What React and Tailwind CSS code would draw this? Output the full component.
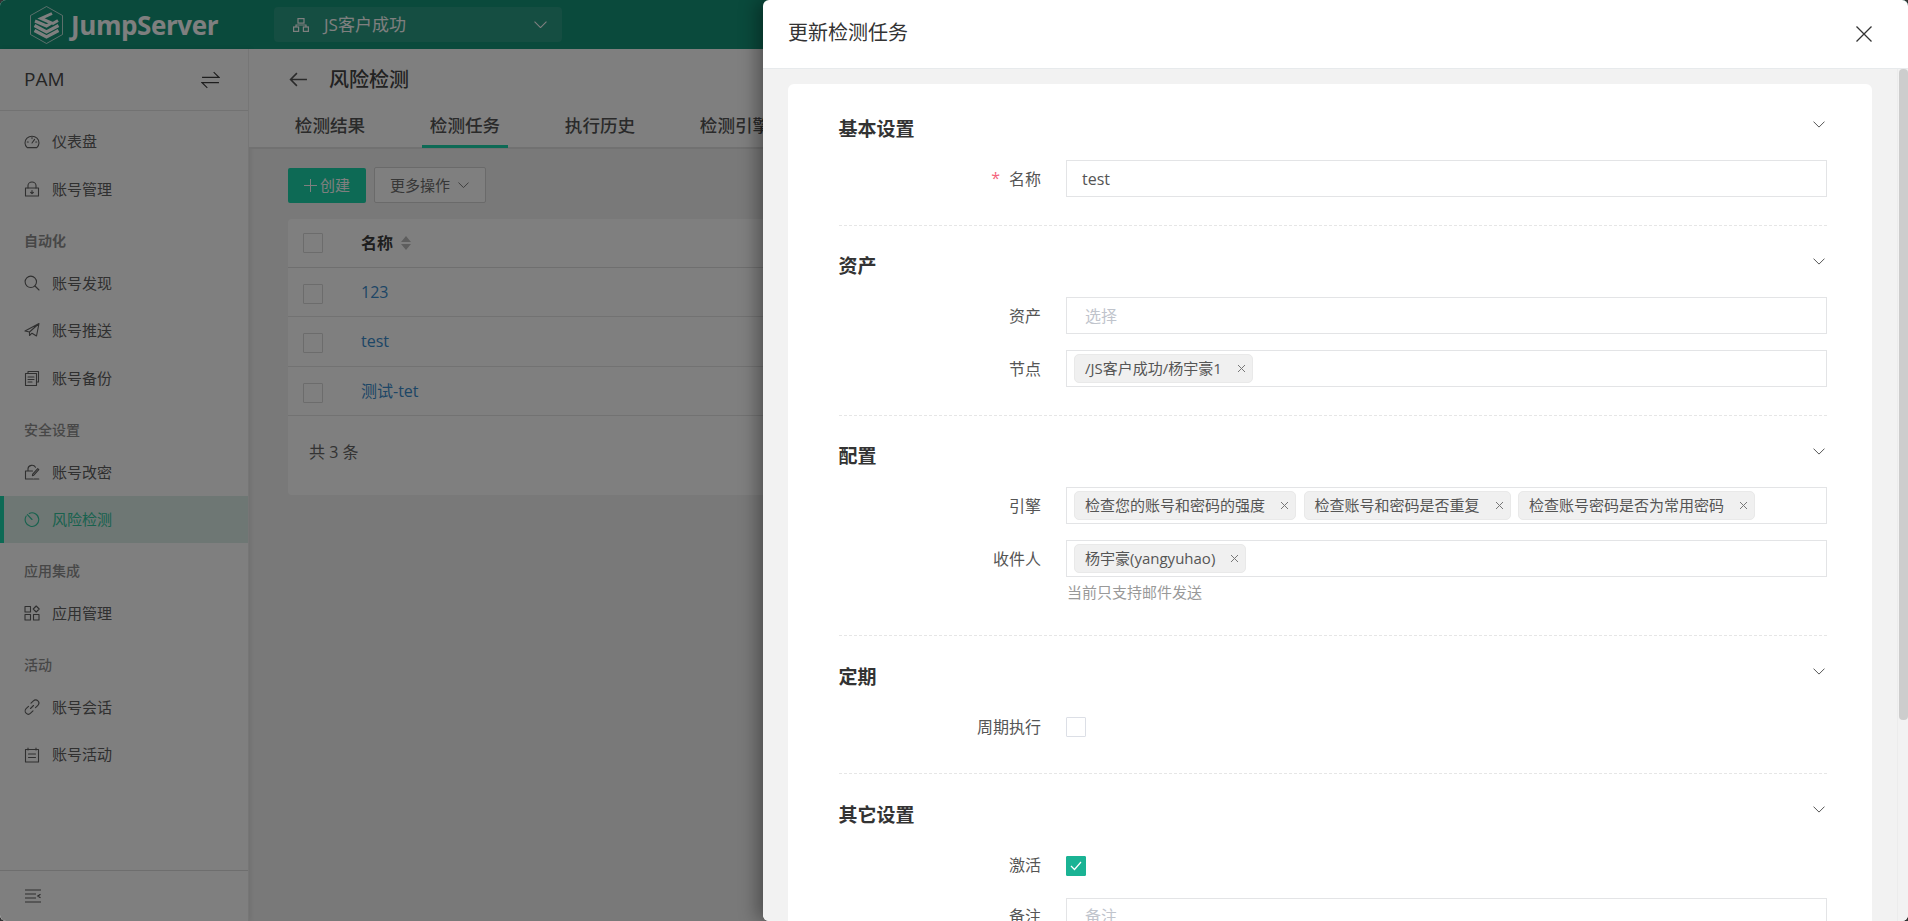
import React from "react";

const S = { fill: "none", stroke: "currentColor", strokeWidth: 1.1, strokeLinecap: "round", strokeLinejoin: "round" };
const I = ({ children }) => (
  <svg width="16" height="16" viewBox="0 0 16 16" {...S}>{children}</svg>
);

const icons = {
  gauge: <I><path d="M3.2 13.6a7 6.6 0 1 1 9.6 0zM8 9l2.6-3.6M3.3 8h1M11.7 8h1M8 3.6v1" /></I>,
  lock: <I><rect x="1.5" y="7" width="13" height="8" /><path d="M4 7V4.6a4 3.6 0 0 1 8 0V7M8 9.5v3M6.6 11.3 8 12.7l1.4-1.4" /></I>,
  search: <I><circle cx="6.8" cy="6.8" r="5.7" /><path d="m11 11 4 4" /></I>,
  send: <I><path d="M1 9 15 1.5 12.5 14 8 11.2 5.5 13.5V10L15 1.5M1 9l4.5 1" /></I>,
  copy: <I><path d="M4 3V1.5h10.5V12H13" /><rect x="1.5" y="3.5" width="11" height="12" /><path d="M4 7h6M4 9.5h6M4 12h4" /></I>,
  lockEdit: <I><path d="M4 7V4.6a4 3.6 0 0 1 7.5-1.4M9 15H1.5V7h7M14.8 15H10M14.8 5.6l-5 5.6-1.4.4.3-1.5 5-5.5z" /></I>,
  timer: <I><path d="M5.2 2.4a6.8 6.8 0 1 1-3 2.6M3.4 3.6 8 8.5" /></I>,
  apps: <I><rect x="1" y="1.5" width="5.5" height="5.5" /><rect x="1" y="9.5" width="5.5" height="5.5" /><rect x="9.5" y="9.5" width="5.5" height="5.5" /><path d="m12.2 1 3 3-3 3-3-3z" /></I>,
  link: <I><path d="M6.5 9.5 9.5 6.5M7 4.2l2.4-2.4a3 3 0 0 1 4.5 4.5l-2.4 2.4M9 11.8l-2.4 2.4a3 3 0 0 1-4.5-4.5L4.5 7.3" /></I>,
  note: <I><rect x="1.5" y="2.5" width="13" height="12.5" /><path d="M4 1v2M12 1v2M4.5 7h7M4.5 10.5h7" /></I>,
};

const Chevron = ({ w = 12, className = "" }) => (
  <svg width={w} height={w * 0.6} viewBox="0 0 12 7" fill="none" stroke="currentColor" strokeWidth="1" className={className}>
    <path d="M.5.5 6 6 11.5.5" />
  </svg>
);

const Item = ({ icon, text, active }) => (
  <div className={`flex h-[47.4px] items-center text-[15px] ${active ? "border-l-[4px] border-[#1ad4aa] bg-[#dceee8] pl-[20px] text-[#30c49c]" : "pl-[24px] text-[#606060]"}`}>
    <span className="flex h-4 w-4 items-center justify-center">{icons[icon]}</span>
    <span className="ml-[12px]">{text}</span>
  </div>
);

const Group = ({ text, bold }) => (
  <div className={`flex h-[46.6px] items-start pl-[24px] pt-[18px] text-[14px] leading-[20px] text-[#8f8f8f] ${bold ? "font-bold" : "font-medium"}`}>{text}</div>
);

const Box = ({ on }) => (
  <span className={`flex h-[20px] w-[20px] items-center justify-center rounded-[1px] border ${on ? "border-[#1ab394] bg-[#1ab394]" : "border-[#dcdfe6] bg-white"}`}>
    {on && (
      <svg width="12" height="10" viewBox="0 0 12 10" fill="none" stroke="#fff" strokeWidth="1.2"><path d="m1 5 3.5 3.5L11 1" /></svg>
    )}
  </span>
);

const TableRow = ({ text, h }) => (
  <div className={`flex items-center border-b ${h} border-[#e4e4e4]`}>
    <span className="ml-[15px] mt-[4px] block h-[20px] w-[20px] rounded-[1px] border border-[#d8d8d8] bg-white" />
    <span className="ml-[38px] text-[16px] text-[#3a8ccc]">{text}</span>
  </div>
);

const Section = ({ title, children, last, shift }) => (
  <section className={`pb-[27.5px] ${last ? "pt-[27.5px]" : "border-b border-dashed border-[#e6e6e6] pt-[26.5px]"}`}>
    <div className="flex h-[28px] items-center justify-between pr-[2px]">
      <h3 className="text-[19px] font-bold leading-[28px] text-[#333]">{title}</h3>
      <Chevron className="mb-[9px] text-[#555]" />
    </div>
    <div className={`flex flex-col ${shift ? "mt-[18px] gap-[14px]" : "mt-[17px] gap-[16px]"}`}>{children}</div>
  </section>
);

const Row = ({ label, req, children }) => (
  <div className="flex">
    <label className="flex h-[37px] w-[227.5px] shrink-0 items-center justify-end pr-[25px] text-[16px] text-[#555]">
      {req && <span className="mr-[9px] mt-[-2px] text-[16px] text-[#f4647c]">*</span>}
      {label}
    </label>
    <div className="min-w-0 flex-1">{children}</div>
  </div>
);

const Input = ({ children, ph }) => (
  <div className={`flex h-[37px] items-center border border-[#e3e4e6] bg-white text-[16px] ${ph ? "pl-[18px] text-[#c0c4cc]" : "pl-[15px] text-[#555]"}`}>{children}</div>
);

const Tag = ({ children }) => (
  <span className="flex h-[29px] items-center rounded-[5px] border border-[#e9e9e9] bg-[#f0f0f0] pl-[10px] pr-[6px] text-[15px] text-[#555]">
    {children}
    <svg width="9" height="9" viewBox="0 0 9 9" stroke="#777" strokeWidth="1" className="ml-[15px]"><path d="m1 1 7 7M8 1 1 8" /></svg>
  </span>
);

const Tags = ({ children }) => (
  <div className="flex h-[37px] items-center gap-[7.5px] border border-[#e3e4e6] bg-white pl-[7px]">{children}</div>
);

export default function App() {
  const sans = "font-['Open_Sans','Noto_Sans_CJK_SC',sans-serif]";
  return (
    <div className={`h-[921px] w-[1908px] overflow-hidden bg-[#333] ${sans}`}>
      <div className="relative flex h-full w-full flex-col overflow-hidden rounded-[6px] bg-[#f3f3f3]">
        {/* top bar */}
        <header className="flex h-[49px] shrink-0 items-center bg-[#149478]">
          <svg width="33" height="38" viewBox="0 0 33 38" fill="none" stroke="#fff" className="ml-[30px]">
            <path d="M16.5.5 32.5 9.5v19l-16 9-16-9v-19z" strokeWidth=".7" />
            <path d="M22 7.5 11 12.5 21.5 17 16.5 20 5 15" strokeWidth="3" />
            <path d="M4.5 19.5 16.5 26l12-6.5" strokeWidth="3.2" />
            <path d="M4.5 24.5 16.5 31l12-6.5" strokeWidth="3.2" />
            <path d="M28 14.5 22 18" strokeWidth="3" />
          </svg>
          <span className="ml-[8px] w-[173px] text-[26px] font-bold leading-none tracking-[-0.4px] text-white">JumpServer</span>
          <div className="ml-[30px] flex h-[35px] w-[288px] items-center rounded-[4px] bg-[#2a9c84] text-[17px] text-white">
            <svg width="16" height="14" viewBox="0 0 16 14" fill="none" stroke="currentColor" strokeWidth="1.2" className="ml-[19px]">
              <rect x="5" y=".6" width="6" height="4.5" /><rect x=".6" y="9" width="5" height="4.4" /><rect x="10.4" y="9" width="5" height="4.4" /><path d="M3 9V7h10v2" />
            </svg>
            <span className="ml-[15px]">JS客户成功</span>
            <Chevron w={13} className="ml-auto mr-[15px]" />
          </div>
        </header>

        <div className="flex min-h-0 flex-1">
          {/* sidebar */}
          <aside className="flex w-[249px] shrink-0 flex-col border-r border-[#ececec] bg-white shadow-[2px_0_5px_rgba(0,0,0,0.08)]">
            <div className="flex h-[62px] shrink-0 items-center justify-between border-b border-[#e4e4e4] pl-[24px] pr-[28px]">
              <span className="text-[19px] text-[#4a4a4a]">PAM</span>
              <svg width="19" height="18" viewBox="0 0 18 17" fill="none" stroke="#3c3c3c" strokeWidth="1.1"><path d="M1 6h16l-5-5M17 11H1l5 5" /></svg>
            </div>
            <nav className="flex-1 pt-[7px]">
              <Item icon="gauge" text="仪表盘" />
              <Item icon="lock" text="账号管理" />
              <Group text="自动化" bold />
              <Item icon="search" text="账号发现" />
              <Item icon="send" text="账号推送" />
              <Item icon="copy" text="账号备份" />
              <Group text="安全设置" />
              <Item icon="lockEdit" text="账号改密" />
              <Item icon="timer" text="风险检测" active />
              <Group text="应用集成" />
              <Item icon="apps" text="应用管理" />
              <Group text="活动" />
              <Item icon="link" text="账号会话" />
              <Item icon="note" text="账号活动" />
            </nav>
            <div className="flex h-[51px] shrink-0 items-center border-t border-[#dcdcdc] pl-[25px]">
              <svg width="16" height="14" viewBox="0 0 16 14" fill="none" stroke="#5a5a5a" strokeWidth="1.2"><path d="M0 1h16M0 5h11M0 9h11M0 13h16M15.5 5.2 12.8 7l2.7 1.8" /></svg>
            </div>
          </aside>

          {/* content */}
          <main className="flex min-w-0 flex-1 flex-col">
            <div className="h-[100px] shrink-0 border-b-2 border-[#e2e2e2] bg-white">
              <div className="flex h-[60px] items-center pl-[40px] pt-[1px]">
                <svg width="19" height="15" viewBox="0 0 18 14" fill="none" stroke="#555" strokeWidth="1.5"><path d="M17 7H1.5M7.5 1 1.5 7l6 6" /></svg>
                <span className="ml-[21px] text-[20px] font-medium text-[#444]">风险检测</span>
              </div>
              <div className="flex h-[38px] gap-[49px] pl-[38px] text-[17.6px] font-medium text-[#555]">
                <span className="flex h-[39px] w-[86px] items-center justify-center pb-[7px]">检测结果</span>
                <span className="flex h-[39px] w-[86px] items-center justify-center border-b-[3px] border-[#1ad4aa] pb-[4px]">检测任务</span>
                <span className="flex h-[39px] w-[86px] items-center justify-center pb-[7px]">执行历史</span>
                <span className="flex h-[39px] w-[86px] items-center justify-center pb-[7px]">检测引擎</span>
              </div>
            </div>
            <div className="pl-[39px] pr-[40px] pt-[18px]">
              <div className="flex items-center gap-[8px]">
                <button className="flex h-[35px] w-[78px] items-center justify-center rounded-[2px] bg-[#1ad4aa] text-[15px] text-white">
                  <svg width="13" height="13" viewBox="0 0 13 13" stroke="currentColor" strokeWidth="1"><path d="M6.5 0v13M0 6.5h13" /></svg>
                  <span className="ml-[3px]">创建</span>
                </button>
                <button className="flex h-[36px] w-[112px] items-center rounded-[2px] border border-[#d4d4d4] bg-white pl-[15px] text-[15px] text-[#6e6e6e]">
                  更多操作
                  <Chevron w={11} className="ml-[8px]" />
                </button>
              </div>
              <div className="mt-[16px] rounded-[4px] bg-white">
                <div className="flex h-[48.5px] items-center border-b border-[#dedede]">
                  <span className="ml-[15px] block h-[20px] w-[20px] rounded-[1px] border border-[#d8d8d8] bg-white" />
                  <span className="ml-[38px] text-[16px] font-bold text-[#3d3d3d]">名称</span>
                  <svg width="12" height="16" viewBox="0 0 12 16" fill="#bdbdbd" className="ml-[7px]"><path d="M6 1 11 7H1zM6 15 1 9h10z" /></svg>
                </div>
                <TableRow text="123" h="h-[49px]" />
                <TableRow text="test" h="h-[50px]" />
                <TableRow text="测试-tet" h="h-[49px]" />
                <div className="h-[79px] pl-[21px] pt-[26px] text-[16px] leading-[20px] text-[#666]">共 3 条</div>
              </div>
            </div>
          </main>
        </div>

        {/* mask */}
        <div className="absolute inset-0 bg-black/50" />

        {/* drawer */}
        <div className="absolute bottom-0 right-0 top-0 flex w-[1145px] flex-col overflow-hidden rounded-l-[6px] bg-white shadow-[-6px_0_18px_rgba(0,0,0,0.35)]">
          <div className="flex h-[69px] shrink-0 items-center justify-between border-b border-[#e7eaec] pl-[25px] pr-[36px]">
            <span className="pb-[2px] text-[20px] text-[#333]">更新检测任务</span>
            <svg width="16" height="16" viewBox="0 0 16 16" stroke="#333" strokeWidth="1.3"><path d="m.5.5 15 15M15.5.5l-15 15" /></svg>
          </div>
          <div className="relative min-h-0 flex-1 overflow-hidden bg-[#f2f2f2] pl-[25px] pr-[36px] pt-[15px]">
            <div className="rounded-[6px] bg-white pl-[50.5px] pr-[45px] pt-[4.5px]">
              <Section title="基本设置">
                <Row label="名称" req><Input>test</Input></Row>
              </Section>
              <Section title="资产">
                <Row label="资产"><Input ph>选择</Input></Row>
                <Row label="节点"><Tags><Tag>/JS客户成功/杨宇豪1</Tag></Tags></Row>
              </Section>
              <Section title="配置">
                <Row label="引擎">
                  <Tags>
                    <Tag>检查您的账号和密码的强度</Tag>
                    <Tag>检查账号和密码是否重复</Tag>
                    <Tag>检查账号密码是否为常用密码</Tag>
                  </Tags>
                </Row>
                <Row label="收件人">
                  <Tags><Tag>杨宇豪(yangyuhao)</Tag></Tags>
                  <p className="mb-[5.5px] mt-[5px] pl-[1px] text-[15px] leading-[20px] text-[#999]">当前只支持邮件发送</p>
                </Row>
              </Section>
              <Section title="定期" shift>
                <Row label="周期执行"><div className="flex h-[37px] items-center"><Box /></div></Row>
              </Section>
              <div className="-mt-[1px]">
                <Section title="其它设置" last shift>
                  <Row label="激活"><div className="flex h-[37px] items-center pt-[1px]"><Box on /></div></Row>
                  <Row label="备注">
                    <div className="h-[70px] border border-[#e3e4e6] bg-white pl-[18px] pt-[5px] text-[16px] text-[#c0c4cc]">备注</div>
                  </Row>
                </Section>
              </div>
            </div>
            {/* scrollbar */}
            <div className="absolute bottom-0 right-0 top-0 w-[11px] border-l border-[#ececec]">
              <div className="ml-auto h-[651px] w-[9px] rounded-[4px] bg-[#cdcdcd]" />
            </div>
          </div>
        </div>
      </div>
    </div>
  );
}
